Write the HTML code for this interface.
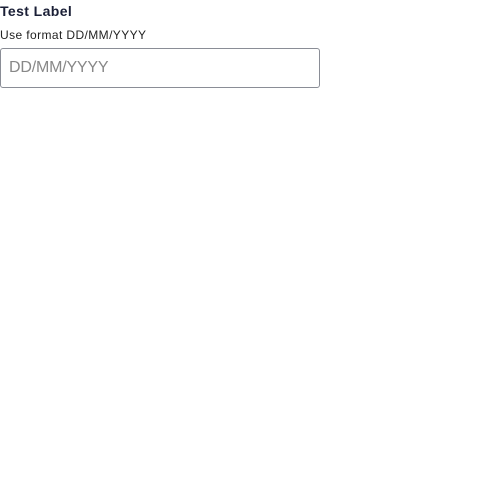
<!DOCTYPE html>
<html><head><style>
body{margin:0;background:#fff;font-family:"Liberation Sans",sans-serif;}
.l{position:absolute;left:0;top:3px;font-size:14px;font-weight:bold;color:#1a1f36;letter-spacing:0.4px;}
.h{position:absolute;left:0;top:28px;font-size:12px;color:#222;letter-spacing:0.4px;}
.b{position:absolute;left:0;top:48px;width:318px;height:38px;border:1px solid #8a8d96;border-radius:3px;}
.p{position:absolute;left:8px;top:10px;font-size:16px;color:#888;letter-spacing:-0.2px;}
</style></head><body>
<div class="l">Test Label</div>
<div class="h">Use format DD/MM/YYYY</div>
<div class="b"><div class="p">DD/MM/YYYY</div></div>
</body></html>
